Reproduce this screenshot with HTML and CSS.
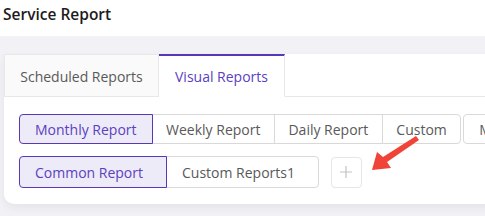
FILE: index.html
```html
<!DOCTYPE html>
<html>
<head>
<meta charset="utf-8">
<link rel="stylesheet" href="styles.css">
</head>
<body>
<header class="header"><h1 class="title">Service Report</h1></header>
<main class="main">
  <section class="card">
    <nav class="tabs">
      <div class="tab">Scheduled Reports</div>
      <div class="tab tab-active">Visual Reports</div>
      <div class="tabs-fill"></div>
    </nav>
    <div class="content">
      <div class="row">
        <div class="group">
          <button class="btn btn-active">Monthly Report</button>
          <button class="btn">Weekly Report</button>
          <button class="btn">Daily Report</button>
          <button class="btn">Custom</button>
        </div>
        <div class="group group-more">
          <button class="btn">More</button>
        </div>
      </div>
      <div class="row row2">
        <div class="group">
          <button class="btn btn-tall btn-active">Common Report</button>
          <button class="btn btn-tall">Custom Reports1</button>
        </div>
        <button class="add" aria-label="add">
          <svg width="14" height="14" viewBox="0 0 14 14"><path d="M7 1v12M1 7h12" stroke="#c4c4c4" stroke-width="1.2" fill="none"/></svg>
        </button>
      </div>
    </div>
  </section>
</main>
<svg class="arrow" width="485" height="216" viewBox="0 0 485 216">
  <polygon points="372,170 377,152 383,157 416,136 419,140 387,162 391,168" fill="#f04438"/>
</svg>
</body>
</html>
```
FILE: styles.css
```css
html, body {
  margin: 0;
  padding: 0;
}
body {
  width: 485px;
  height: 216px;
  overflow: hidden;
  background: #f2f2f6;
  font-family: "Open Sans", "Noto Sans", sans-serif;
  position: relative;
}
.header {
  height: 36px;
  background: #fff;
  display: flex;
  align-items: center;
  padding-left: 3px;
}
.title {
  margin: 0;
  font-size: 15.5px;
  font-weight: 600;
  color: #1c1c1c;
  line-height: 20px;
  margin-top: -8px;
  white-space: nowrap;
}
.main {
  padding: 18px 0 0 4px;
}
.card {
  background: #fff;
  height: 150px;
  margin-right: -30px;
  border-radius: 0 0 10px 10px;
  box-shadow: 0 4px 10px rgba(0, 0, 0, 0.06);
}
.tabs {
  display: flex;
  height: 43px;
  box-sizing: border-box;
}
.tab {
  box-sizing: border-box;
  height: 43px;
  padding: 1px 0 0;
  display: flex;
  align-items: center;
  justify-content: center;
  white-space: nowrap;
  font-size: 14px;
  color: #595959;
  background: #fafafa;
  border: 1px solid #e8e8e8;
}
.tab:first-child {
  width: 155px;
}
.tab-active {
  width: 126px;
  background: #fff;
  color: #5b40c1;
  border-left: none;
  border-top: 2px solid #5a37b8;
  border-bottom-color: #fff;
  padding-top: 0;
}
.tabs-fill {
  flex: 1;
  border-bottom: 1px solid #e8e8e8;
}
.content {
  padding: 17px 0 0 15px;
}
.row {
  display: flex;
  align-items: center;
  white-space: nowrap;
}
.row2 {
  margin-top: 12px;
}
.group {
  display: flex;
}
.group-more {
  margin-left: 2px;
}
.btn {
  box-sizing: border-box;
  height: 30px;
  padding: 0 13.5px;
  margin: 0 0 0 -1px;
  font-family: inherit;
  font-size: 14px;
  color: #595959;
  background: #fff;
  border: 1px solid #d9d9d9;
  border-radius: 0;
  position: relative;
}
.group .btn:first-child {
  margin-left: 0;
  padding: 0 15px;
  border-radius: 4px 0 0 4px;
}
.group .btn:last-child {
  border-radius: 0 4px 4px 0;
}
.group-more .btn:first-child {
  border-radius: 4px 0 0 4px;
}
.btn-tall,
.group .btn-tall:first-child {
  height: 32px;
  padding: 0 23px 0 15px;
}
.btn-active {
  background: #eeebf8;
  color: #5b40c1;
  border-color: #5a37b8;
  z-index: 1;
}
.add {
  box-sizing: border-box;
  width: 31px;
  height: 31px;
  margin-left: 12px;
  border: 1px solid #e6e6e6;
  border-radius: 4px;
  background: #fff;
  display: flex;
  align-items: center;
  justify-content: center;
  padding: 0;
}
.arrow {
  position: absolute;
  left: 0;
  top: 0;
}
```
